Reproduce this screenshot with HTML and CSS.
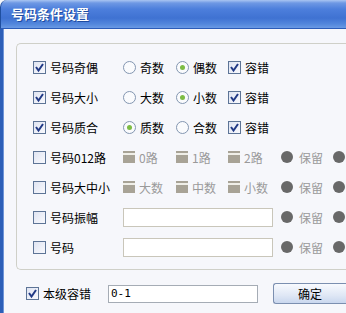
FILE: index.html
```html
<!DOCTYPE html>
<html lang="zh-cn">
<head>
    <meta charset="UTF-8">
    <title>号码条件设置</title>
    <link rel="stylesheet" href="styles.css">
</head>
<body>
    <div class="window">
        <div class="titlebar">号码条件设置</div>

        <div class="client">
            <div class="group">
                <div class="row">
                    <span class="item"><span class="chk on"><svg viewBox="0 0 11 11"><path d="M2 5 L4.5 8.5 L9 2"/></svg></span>号码奇偶</span>
                    <span class="item"><span class="radio"></span>奇数</span>
                    <span class="item"><span class="radio on"></span>偶数</span>
                    <span class="item"><span class="chk on"><svg viewBox="0 0 11 11"><path d="M2 5 L4.5 8.5 L9 2"/></svg></span>容错</span>
                </div>
                <div class="row">
                    <span class="item"><span class="chk on"><svg viewBox="0 0 11 11"><path d="M2 5 L4.5 8.5 L9 2"/></svg></span>号码大小</span>
                    <span class="item"><span class="radio"></span>大数</span>
                    <span class="item"><span class="radio on"></span>小数</span>
                    <span class="item"><span class="chk on"><svg viewBox="0 0 11 11"><path d="M2 5 L4.5 8.5 L9 2"/></svg></span>容错</span>
                </div>
                <div class="row">
                    <span class="item"><span class="chk on"><svg viewBox="0 0 11 11"><path d="M2 5 L4.5 8.5 L9 2"/></svg></span>号码质合</span>
                    <span class="item"><span class="radio on"></span>质数</span>
                    <span class="item"><span class="radio"></span>合数</span>
                    <span class="item"><span class="chk on"><svg viewBox="0 0 11 11"><path d="M2 5 L4.5 8.5 L9 2"/></svg></span>容错</span>
                </div>
                <div class="row">
                    <span class="item"><span class="chk"></span>号码012路</span>
                    <span class="item off"><span class="chk dis"></span>0路</span>
                    <span class="item off"><span class="chk dis"></span>1路</span>
                    <span class="item off"><span class="chk dis"></span>2路</span>
                    <span class="item off"><span class="dot"></span>保留</span>
                    <span class="item off"><span class="dot"></span></span>
                </div>
                <div class="row">
                    <span class="item"><span class="chk"></span>号码大中小</span>
                    <span class="item off"><span class="chk dis"></span>大数</span>
                    <span class="item off"><span class="chk dis"></span>中数</span>
                    <span class="item off"><span class="chk dis"></span>小数</span>
                    <span class="item off"><span class="dot"></span>保留</span>
                    <span class="item off"><span class="dot"></span></span>
                </div>
                <div class="row">
                    <span class="item"><span class="chk"></span>号码振幅</span>
                    <span class="field"></span>
                    <span class="item off"><span class="dot"></span>保留</span>
                    <span class="item off"><span class="dot"></span></span>
                </div>
                <div class="row">
                    <span class="item"><span class="chk"></span>号码</span>
                    <span class="field"></span>
                    <span class="item off"><span class="dot"></span>保留</span>
                    <span class="item off"><span class="dot"></span></span>
                </div>
            </div>

            <div class="bottom">
                <span class="item"><span class="chk on"><svg viewBox="0 0 11 11"><path d="M2 5 L4.5 8.5 L9 2"/></svg></span>本级容错</span>
                <span class="edit">0-1</span>
                <span class="button">确定</span>
            </div>
        </div>
    </div>
</body>
</html>
```

FILE: styles.css
```css
body {
    margin: 0;
    padding: 0;
    width: 346px;
    height: 313px;
    overflow: hidden;
    font-family: "Noto Sans CJK SC", "DejaVu Sans", sans-serif;
    font-size: 12px;
    color: #000;
    background-color: #f6f7fb;
}

.window {
    height: 313px;
    display: flex;
    flex-direction: column;
    overflow: hidden;
}

.titlebar {
    height: 28px;
    line-height: 28px;
    padding-left: 10px;
    color: #fff;
    font-weight: bold;
    font-size: 13px;
    text-shadow: 1px 1px 0 #1d4aa0;
    border-top-left-radius: 7px;
    border-left: 1px solid #1f4f9f;
    border-bottom: 1px solid #2b5cb8;
    background: linear-gradient(#a9c5f2 0, #6e98e4 3px, #4d7fdc 9px, #3f72d2 18px, #5287dc 24px, #6a9ae4 28px);
}

.client {
    flex: 1;
    border-left: 3px solid #2d5fb8;
    box-shadow: inset 1px 0 0 #6f95d8;
    padding: 14px 0 0 13px;
    overflow: hidden;
}

.group {
    border: 1px solid #cfd0c8;
    border-right: none;
    border-radius: 5px 0 0 5px;
    padding: 8px 0 7px 16px;
    overflow: hidden;
}

.row {
    height: 30px;
    display: grid;
    grid-template-columns: 90px 53px 52px 53px 52px 13px;
    align-items: center;
}

.item {
    display: flex;
    align-items: center;
    white-space: nowrap;
    overflow: hidden;
}

.item.off {
    color: #9a9a9a;
}

.chk {
    width: 11px;
    height: 11px;
    border: 1px solid #5d7496;
    background: linear-gradient(135deg, #dfe4f2, #f8f9fd);
    margin-right: 4px;
    display: flex;
    align-items: center;
    justify-content: center;
    flex: none;
}

.chk svg {
    width: 11px;
    height: 11px;
}

.chk path {
    fill: none;
    stroke: #213a86;
    stroke-width: 2;
}

.chk.dis {
    width: 12px;
    height: 11px;
    border: none;
    border-top: 1px solid #a8a396;
    background: linear-gradient(#a8a396 0, #a8a396 1px, #f0efe8 1px, #f0efe8 3px, #a8a396 3px);
}

.radio {
    width: 11px;
    height: 11px;
    border: 1px solid #8396b0;
    border-radius: 50%;
    background: #fafbfd;
    margin-right: 4px;
    flex: none;
    display: flex;
    align-items: center;
    justify-content: center;
}

.radio.on::after {
    content: "";
    width: 5px;
    height: 5px;
    border-radius: 50%;
    background: #7dbc44;
}

.dot {
    width: 12px;
    height: 12px;
    border-radius: 50%;
    background: #686868;
    margin-right: 6px;
    flex: none;
}

.field {
    grid-column: span 3;
    width: 148px;
    height: 17px;
    border: 1px solid #c9c6ba;
    background: #fff;
}

.bottom {
    display: flex;
    align-items: center;
    padding: 13px 0 0 10px;
}

.bottom .item {
    width: 82px;
    flex: none;
}

.edit {
    flex: none;
    width: 146px;
    height: 16px;
    line-height: 16px;
    padding-left: 2px;
    border: 1px solid #a5acb5;
    background: #fff;
    font-family: "DejaVu Sans Mono", monospace;
    font-size: 11px;
}

.button {
    flex: none;
    margin-left: 15px;
    width: 72px;
    height: 19px;
    line-height: 19px;
    text-align: center;
    border: 1px solid #7b8fb0;
    border-right: none;
    border-radius: 3px 0 0 3px;
    background: linear-gradient(#f8fafe, #dfe7f5 60%, #c9d7ee);
}
```
